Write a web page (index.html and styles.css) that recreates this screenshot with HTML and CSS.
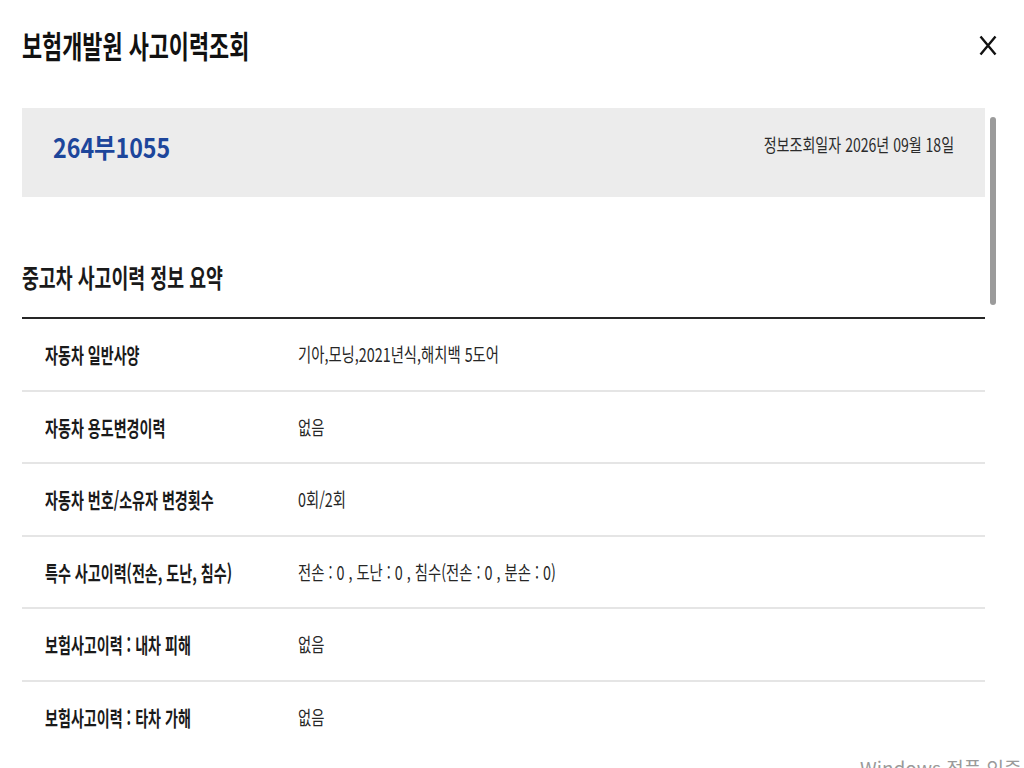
FILE: index.html
```html
<!DOCTYPE html>
<html lang="ko">
<head>
<meta charset="utf-8">
<title>보험개발원 사고이력조회</title>
<link rel="stylesheet" href="styles.css">
</head>
<body>
<div class="modal">
  <header class="modal-head">
    <h1 class="title"><span class="sx sx-title">보험개발원 사고이력조회</span></h1>
    <button class="close" type="button" aria-label="닫기">
      <svg width="18" height="21" viewBox="0 0 18 21" aria-hidden="true">
        <path d="M1.5 1.5 L16.5 19.5 M16.5 1.5 L1.5 19.5" stroke="#111" stroke-width="2.4" fill="none" stroke-linecap="butt"/>
      </svg>
    </button>
  </header>

  <main class="modal-body">
    <section class="car-box">
      <div class="plate"><span class="sx sx-plate">264부1055</span></div>
      <div class="date"><span class="sx sx-date">정보조회일자 2026년 09월 18일</span></div>
    </section>

    <section class="summary">
      <h2 class="summary-title"><span class="sx sx-h2">중고차 사고이력 정보 요약</span></h2>
      <div class="table">
        <div class="row">
          <div class="label"><span class="sx sx-label">자동차 일반사양</span></div>
          <div class="value"><span class="sx sx-value">기아,모닝,2021년식,해치백 5도어</span></div>
        </div>
        <div class="row">
          <div class="label"><span class="sx sx-label">자동차 용도변경이력</span></div>
          <div class="value"><span class="sx sx-value">없음</span></div>
        </div>
        <div class="row">
          <div class="label"><span class="sx sx-label">자동차 번호/소유자 변경횟수</span></div>
          <div class="value"><span class="sx sx-value">0회/2회</span></div>
        </div>
        <div class="row">
          <div class="label"><span class="sx sx-label">특수 사고이력(전손, 도난, 침수)</span></div>
          <div class="value"><span class="sx sx-value">전손 : 0 , 도난 : 0 , 침수(전손 : 0 , 분손 : 0)</span></div>
        </div>
        <div class="row">
          <div class="label"><span class="sx sx-label">보험사고이력 : 내차 피해</span></div>
          <div class="value"><span class="sx sx-value">없음</span></div>
        </div>
        <div class="row row-last">
          <div class="label"><span class="sx sx-label">보험사고이력 : 타차 가해</span></div>
          <div class="value"><span class="sx sx-value">없음</span></div>
        </div>
      </div>
    </section>
  </main>

  <div class="scrollbar" aria-hidden="true"></div>
  <div class="watermark" aria-hidden="true">Windows 정품 인증</div>
</div>
</body>
</html>
```

FILE: styles.css
```css
html, body {
  margin: 0;
  padding: 0;
  overflow: hidden;
  background: #ffffff;
}

body {
  font-family: "Noto Sans CJK KR", "Noto Sans", sans-serif;
  color: #1a1a1a;
}

.modal {
  position: relative;
  width: 1024px;
  height: 768px;
}

.sx {
  display: inline-block;
  white-space: nowrap;
  transform-origin: left center;
}

/* header */
.modal-head {
  height: 90px;
  margin-bottom: 18px;
  padding: 0 27px 0 22px;
  display: flex;
  align-items: center;
  justify-content: space-between;
}

.title {
  margin: 0;
  font-size: 31px;
  font-weight: 700;
  line-height: 40px;
  color: #111;
}

.sx-title {
  transform: scaleX(0.705);
}

.close {
  border: 0;
  background: none;
  padding: 0;
  margin: 0;
  width: 18px;
  height: 21px;
  display: flex;
}

/* body */
.modal-body {
  padding: 0 39px 0 22px;
}

.car-box {
  height: 89px;
  background: #ececec;
  padding: 0 31px;
  display: flex;
  align-items: center;
  justify-content: space-between;
}

.plate {
  font-size: 27px;
  font-weight: 700;
  line-height: 32px;
  color: #1d469b;
  margin-top: -12px;
}

.sx-plate {
  transform: scaleX(0.86);
}

.date {
  font-size: 18px;
  line-height: 24px;
  color: #2b2b2b;
  margin-top: -18px;
}

.sx-date {
  transform-origin: right center;
  transform: scaleX(0.78);
}

.summary {
  padding-top: 62px;
}

.summary-title {
  margin: 0 0 22px;
  font-size: 26px;
  font-weight: 700;
  line-height: 36px;
  color: #1a1a1a;
}

.sx-h2 {
  transform: scaleX(0.705);
}

.table {
  border-top: 2px solid #262626;
}

.row {
  display: grid;
  grid-template-columns: 276px 1fr;
  align-items: center;
  height: 70.5px;
  border-bottom: 2px solid #e5e5e5;
}

.row-last {
  border-bottom: 0;
}

.label {
  padding-left: 23px;
  font-size: 21px;
  font-weight: 700;
  line-height: 28px;
  color: #1a1a1a;
}

.sx-label {
  transform: scaleX(0.67);
}

.value {
  font-size: 19px;
  line-height: 28px;
  color: #262626;
}

.sx-value {
  transform: scaleX(0.755);
}

/* overlays */
.scrollbar {
  position: absolute;
  left: 990px;
  top: 117px;
  width: 6px;
  height: 188px;
  border-radius: 3px;
  background: #9b9b9b;
}

.watermark {
  position: absolute;
  left: 860px;
  top: 756px;
  font-size: 19px;
  line-height: 24px;
  color: #9a9a9a;
  white-space: nowrap;
}
```
